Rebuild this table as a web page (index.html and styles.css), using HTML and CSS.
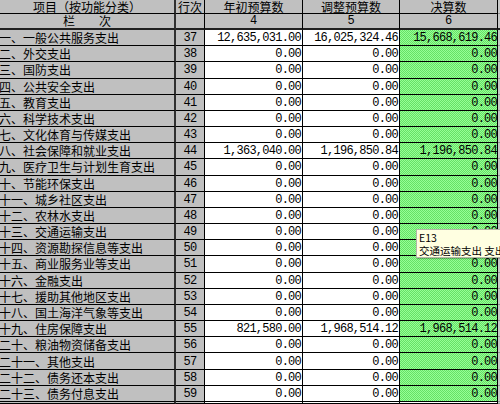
FILE: index.html
```html
<!DOCTYPE html>
<html lang="zh">
<head>
<meta charset="utf-8">
<title>决算表</title>
<link rel="stylesheet" href="styles.css">
</head>
<body>
<div class="sheet">
  <div class="row head1">
    <div class="c lab ctr">项目（按功能分类）</div>
    <div class="c no ctr">行次</div>
    <div class="c hd">年初预算数</div>
    <div class="c hd">调整预算数</div>
    <div class="c hd">决算数</div>
    <div class="c edge"></div>
  </div>
  <div class="row head2">
    <div class="c lab ctr">栏　　次</div>
    <div class="c no"></div>
    <div class="c hd num">4</div>
    <div class="c hd num">5</div>
    <div class="c hd num">6</div>
    <div class="c edge"></div>
  </div>
  <div class="row data"><div class="c lab">一、一般公共服务支出</div><div class="c no">37</div><div class="c v">12,635,031.00</div><div class="c v">16,025,324.46</div><div class="c v g">15,668,619.46</div><div class="c edge"></div></div>
  <div class="row data"><div class="c lab">二、外交支出</div><div class="c no">38</div><div class="c v">0.00</div><div class="c v">0.00</div><div class="c v g">0.00</div><div class="c edge"></div></div>
  <div class="row data"><div class="c lab">三、国防支出</div><div class="c no">39</div><div class="c v">0.00</div><div class="c v">0.00</div><div class="c v g">0.00</div><div class="c edge"></div></div>
  <div class="row data"><div class="c lab">四、公共安全支出</div><div class="c no">40</div><div class="c v">0.00</div><div class="c v">0.00</div><div class="c v g">0.00</div><div class="c edge"></div></div>
  <div class="row data"><div class="c lab">五、教育支出</div><div class="c no">41</div><div class="c v">0.00</div><div class="c v">0.00</div><div class="c v g">0.00</div><div class="c edge"></div></div>
  <div class="row data"><div class="c lab">六、科学技术支出</div><div class="c no">42</div><div class="c v">0.00</div><div class="c v">0.00</div><div class="c v g">0.00</div><div class="c edge"></div></div>
  <div class="row data"><div class="c lab">七、文化体育与传媒支出</div><div class="c no">43</div><div class="c v">0.00</div><div class="c v">0.00</div><div class="c v g">0.00</div><div class="c edge"></div></div>
  <div class="row data"><div class="c lab">八、社会保障和就业支出</div><div class="c no">44</div><div class="c v">1,363,040.00</div><div class="c v">1,196,850.84</div><div class="c v g">1,196,850.84</div><div class="c edge"></div></div>
  <div class="row data"><div class="c lab">九、医疗卫生与计划生育支出</div><div class="c no">45</div><div class="c v">0.00</div><div class="c v">0.00</div><div class="c v g">0.00</div><div class="c edge"></div></div>
  <div class="row data"><div class="c lab">十、节能环保支出</div><div class="c no">46</div><div class="c v">0.00</div><div class="c v">0.00</div><div class="c v g">0.00</div><div class="c edge"></div></div>
  <div class="row data"><div class="c lab">十一、城乡社区支出</div><div class="c no">47</div><div class="c v">0.00</div><div class="c v">0.00</div><div class="c v g">0.00</div><div class="c edge"></div></div>
  <div class="row data"><div class="c lab">十二、农林水支出</div><div class="c no">48</div><div class="c v">0.00</div><div class="c v">0.00</div><div class="c v g">0.00</div><div class="c edge"></div></div>
  <div class="row data"><div class="c lab">十三、交通运输支出</div><div class="c no">49</div><div class="c v">0.00</div><div class="c v">0.00</div><div class="c v g">0.00</div><div class="c edge"></div></div>
  <div class="row data"><div class="c lab">十四、资源勘探信息等支出</div><div class="c no">50</div><div class="c v">0.00</div><div class="c v">0.00</div><div class="c v g">0.00</div><div class="c edge"></div></div>
  <div class="row data"><div class="c lab">十五、商业服务业等支出</div><div class="c no">51</div><div class="c v">0.00</div><div class="c v">0.00</div><div class="c v g">0.00</div><div class="c edge"></div></div>
  <div class="row data"><div class="c lab">十六、金融支出</div><div class="c no">52</div><div class="c v">0.00</div><div class="c v">0.00</div><div class="c v g">0.00</div><div class="c edge"></div></div>
  <div class="row data"><div class="c lab">十七、援助其他地区支出</div><div class="c no">53</div><div class="c v">0.00</div><div class="c v">0.00</div><div class="c v g">0.00</div><div class="c edge"></div></div>
  <div class="row data"><div class="c lab">十八、国土海洋气象等支出</div><div class="c no">54</div><div class="c v">0.00</div><div class="c v">0.00</div><div class="c v g">0.00</div><div class="c edge"></div></div>
  <div class="row data"><div class="c lab">十九、住房保障支出</div><div class="c no">55</div><div class="c v">821,580.00</div><div class="c v">1,968,514.12</div><div class="c v g">1,968,514.12</div><div class="c edge"></div></div>
  <div class="row data"><div class="c lab">二十、粮油物资储备支出</div><div class="c no">56</div><div class="c v">0.00</div><div class="c v">0.00</div><div class="c v g">0.00</div><div class="c edge"></div></div>
  <div class="row data"><div class="c lab">二十一、其他支出</div><div class="c no">57</div><div class="c v">0.00</div><div class="c v">0.00</div><div class="c v g">0.00</div><div class="c edge"></div></div>
  <div class="row data"><div class="c lab">二十二、债务还本支出</div><div class="c no">58</div><div class="c v">0.00</div><div class="c v">0.00</div><div class="c v g">0.00</div><div class="c edge"></div></div>
  <div class="row data"><div class="c lab">二十三、债务付息支出</div><div class="c no">59</div><div class="c v">0.00</div><div class="c v">0.00</div><div class="c v g">0.00</div><div class="c edge"></div></div>
  <div class="row tail"><div class="c lab"></div><div class="c no"></div><div class="c v"></div><div class="c v"></div><div class="c v"></div><div class="c edge"></div></div>
  <div class="tip">
    <div class="tip-line">E13</div>
    <div class="tip-line">交通运输支出 支出</div>
  </div>
</div>
</body>
</html>
```

FILE: styles.css
```css
html, body {
  margin: 0;
  padding: 0;
  background: #ffffff;
}
body {
  width: 500px;
  height: 404px;
  overflow: hidden;
}
.sheet {
  position: relative;
  display: flex;
  flex-direction: column;
  width: 500px;
  height: 404px;
  overflow: hidden;
  font-family: "Noto Sans CJK SC", "Noto Sans", sans-serif;
  font-size: 12px;
  color: #000;
}
.row {
  display: grid;
  grid-template-columns: 176px 29px 98px 97px 98px 2px;
  flex: none;
}
.head1 { height: 14px; }
.head2 { height: 16px; }
.data { height: 16.18px; }
.tail { flex: 1; }
.c {
  box-sizing: border-box;
  border-right: 1px solid #000;
  border-bottom: 1px solid #000;
  white-space: nowrap;
  overflow: hidden;
  display: flex;
  align-items: center;
  line-height: 1;
}
.head1 .c, .head2 .c {
  overflow: visible;
  padding-top: 0;
}
.head1 .c { line-height: 13px; }
.head2 .c { border-bottom: 2px solid #202020; }
.lab {
  background: #c0c0c0;
  border-right: 2px solid #303030;
  text-indent: -1px;
  padding-top: 1px;
}
.ctr { justify-content: center; text-indent: 0; }
.no {
  background: #c0c0c0;
  justify-content: center;
  font-family: "Liberation Mono", monospace;
  font-size: 12px;
  letter-spacing: -0.75px;
  padding-top: 1px;
}
.head1 .no {
  font-family: "Noto Sans CJK SC", "Noto Sans", sans-serif;
  letter-spacing: 0;
}
.hd {
  background: #c0c0c0;
  justify-content: center;
}
.num {
  font-family: "Liberation Mono", monospace;
  font-size: 12px;
}
.v {
  background: #ffffff;
  justify-content: flex-end;
  padding-right: 1px;
  padding-top: 1px;
  font-family: "Liberation Mono", monospace;
  font-size: 12px;
  letter-spacing: -0.75px;
}
.g {
  background: repeating-conic-gradient(#96ff96 0 25%, #66e066 0 50%) 0 0 / 2px 2px;
  padding-right: 0;
}
.edge {
  background: #c8c8c8;
  border-right: none;
  border-bottom-color: #909090;
}
.tip {
  position: absolute;
  left: 416px;
  top: 229px;
  width: 96px;
  height: 29px;
  box-sizing: border-box;
  background: #ffffe1;
  border: 1px solid #b4b4a8;
  box-shadow: 1px 1px 1px rgba(0, 0, 0, 0.25);
  padding: 1px 0 0 2px;
  font-family: "Noto Sans CJK SC", "Noto Sans", sans-serif;
  font-size: 10.5px;
  line-height: 13px;
  color: #000;
  white-space: nowrap;
}
```
